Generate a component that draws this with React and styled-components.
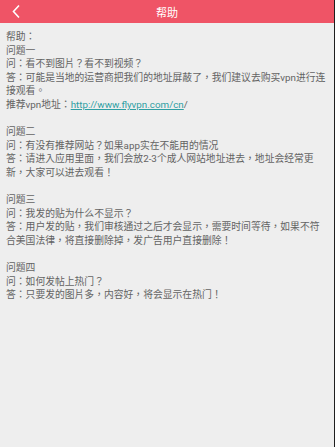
import styled, { createGlobalStyle } from "styled-components";

const Global = createGlobalStyle`
  html, body {
    margin: 0;
    padding: 0;
    background: #eeeeee;
  }
  body {
    font-family: Roboto, "Noto Sans CJK TC", sans-serif;
  }
`;

const Page = styled.div`
  width: 335px;
  height: 447px;
  box-sizing: border-box;
  background: #eeeeee;
  border-right: 1px solid #1e1e1e;
  overflow: hidden;
`;

const Header = styled.div`
  height: 23px;
  background: #ef5466;
  display: flex;
  align-items: center;
  justify-content: center;
  position: relative;
  color: #fff;
  font-size: 11px;
  font-family: "Noto Sans CJK TC", sans-serif;
`;

const Back = styled.div`
  position: absolute;
  left: 11px;
  top: 4px;
  width: 10px;
  height: 15px;
  display: flex;
  svg {
    display: block;
  }
`;

const Content = styled.div`
  padding: 7px 6px 0 6px;
  font-size: 9.8px;
  line-height: 13.6px;
  color: #636363;
  font-family: Roboto, "Noto Sans CJK TC", sans-serif;
`;

const Line = styled.div`
  min-height: 13.6px;
`;

const Section = styled.div`
  margin-bottom: 13.6px;
`;

const Link = styled.a`
  color: #2f9fa3;
  text-decoration: underline;
`;

const sections = [
  {
    title: "问题二",
    q: "问：有没有推荐网站？如果app实在不能用的情况",
    a: "答：请进入应用里面，我们会放2-3个成人网站地址进去，地址会经常更新，大家可以进去观看！",
  },
  {
    title: "问题三",
    q: "问：我发的贴为什么不显示？",
    a: "答：用户发的贴，我们审核通过之后才会显示，需要时间等待，如果不符合美国法律，将直接删除掉，发广告用户直接删除！",
  },
  {
    title: "问题四",
    q: "问：如何发帖上热门？",
    a: "答：只要发的图片多，内容好，将会显示在热门！",
  },
];

export default function App() {
  return (
    <Page>
      <Global />
      <Header>
        <Back>
          <svg width="10" height="15" viewBox="0 0 10 15">
            <path
              d="M8 1.5 L2.5 7.5 L8 13.5"
              fill="none"
              stroke="#fff"
              strokeWidth="1.6"
            />
          </svg>
        </Back>
        帮助
      </Header>
      <Content>
        <Section>
          <Line>帮助：</Line>
          <Line>问题一</Line>
          <Line>问：看不到图片？看不到视频？</Line>
          <Line>
            答：可能是当地的运营商把我们的地址屏蔽了，我们建议去购买vpn进行连接观看。
          </Line>
          <Line>
            推荐vpn地址：<Link href="#">http://www.flyvpn.com/cn</Link>/
          </Line>
        </Section>
        {sections.map((s, index) => (
          <Section key={index}>
            <Line>{s.title}</Line>
            <Line>{s.q}</Line>
            <Line>{s.a}</Line>
          </Section>
        ))}
      </Content>
    </Page>
  );
}
